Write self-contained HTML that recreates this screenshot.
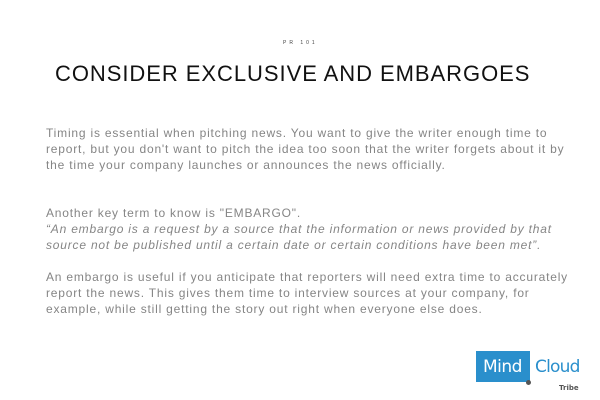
<!DOCTYPE html>
<html><head><style>
body{margin:0;width:600px;height:400px;background:#fff;position:relative;overflow:hidden;font-family:"Liberation Sans",Arial,sans-serif}
.l{position:absolute;left:46px;font-size:12px;letter-spacing:0.8px;color:#858585;white-space:nowrap;line-height:14px}
.i{font-style:italic}
</style></head><body>
<div style="position:absolute;left:283px;top:40px;font-size:5px;letter-spacing:3px;color:#444">PR 101</div>
<div style="position:absolute;left:55px;top:61px;font-size:22px;letter-spacing:0.95px;color:#111;white-space:nowrap;line-height:26px">CONSIDER EXCLUSIVE AND EMBARGOES</div>
<div class="l" style="top:126px">Timing is essential when pitching news. You want to give the writer enough time to</div>
<div class="l" style="top:142px">report, but you don't want to pitch the idea too soon that the writer forgets about it by</div>
<div class="l" style="top:158px">the time your company launches or announces the news officially.</div>
<div class="l" style="top:206px">Another key term to know is "EMBARGO".</div>
<div class="l i" style="top:222px">“An embargo is a request by a source that the information or news provided by that</div>
<div class="l i" style="top:238px">source not be published until a certain date or certain conditions have been met”.</div>
<div class="l" style="top:270px">An embargo is useful if you anticipate that reporters will need extra time to accurately</div>
<div class="l" style="top:286px">report the news. This gives them time to interview sources at your company, for</div>
<div class="l" style="top:302px">example, while still getting the story out right when everyone else does.</div>
<div style="position:absolute;left:476px;top:351px;width:54px;height:31px;background:#2a8fcc"></div>
<div style="position:absolute;left:483px;top:356px;font-size:17px;color:#fff;line-height:22px;font-family:'DejaVu Sans',sans-serif;letter-spacing:-0.5px">Mind</div>
<div style="position:absolute;left:526px;top:380px;width:5px;height:5px;border-radius:50%;background:#555"></div>
<div style="position:absolute;left:535px;top:356px;font-size:17px;color:#2a8fcc;line-height:22px;font-family:'DejaVu Sans',sans-serif;letter-spacing:-0.8px">Cloud</div>
<div style="position:absolute;left:559px;top:384px;font-size:7px;color:#555;font-weight:bold;font-family:'DejaVu Sans',sans-serif">Tribe</div>
</body></html>
